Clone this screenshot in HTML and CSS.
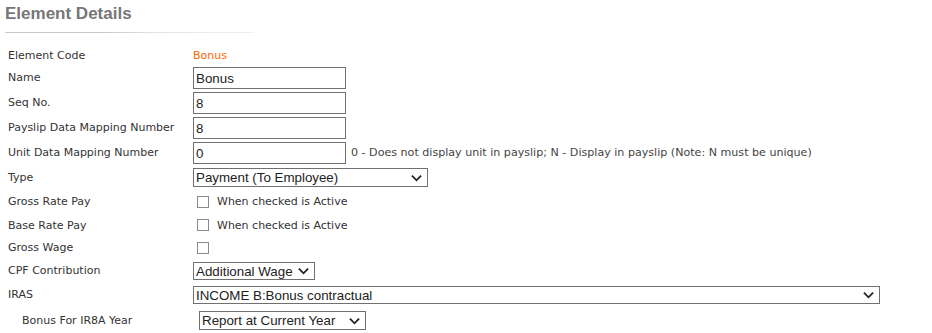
FILE: index.html
```html
<!DOCTYPE html>
<html lang="en">
<head>
  <meta charset="UTF-8">
  <title>Element Details</title>
  <link rel="stylesheet" href="styles.css">
</head>
<body>
  <h2 class="title">Element Details</h2>
  <div class="title-line"></div>

  <div class="form">
    <div class="row r-code">
      <label>Element Code</label>
      <span class="code">Bonus</span>
    </div>
    <div class="row r-input">
      <label for="name">Name</label>
      <input type="text" id="name" value="Bonus">
    </div>
    <div class="row r-input">
      <label for="seq">Seq No.</label>
      <input type="text" id="seq" value="8">
    </div>
    <div class="row r-input">
      <label for="payslip">Payslip Data Mapping Number</label>
      <input type="text" id="payslip" value="8">
    </div>
    <div class="row r-input">
      <label for="unit">Unit Data Mapping Number</label>
      <input type="text" id="unit" value="0">
      <span class="hint">0 - Does not display unit in payslip; N - Display in payslip (Note: N must be unique)</span>
    </div>
    <div class="row r-type">
      <label for="type">Type</label>
      <span class="sel w-type">
        <select id="type"><option>Payment (To Employee)</option></select>
        <svg viewBox="0 0 12 8"><path d="M1 1.5l5 5 5-5" /></svg>
      </span>
    </div>
    <div class="row r-check1">
      <label>Gross Rate Pay</label>
      <input type="checkbox" class="chk">
      <span class="chk-text">When checked is Active</span>
    </div>
    <div class="row r-check2">
      <label>Base Rate Pay</label>
      <input type="checkbox" class="chk">
      <span class="chk-text">When checked is Active</span>
    </div>
    <div class="row r-check3">
      <label>Gross Wage</label>
      <input type="checkbox" class="chk">
    </div>
    <div class="row r-cpf">
      <label for="cpf">CPF Contribution</label>
      <span class="sel w-cpf">
        <select id="cpf"><option>Additional Wage</option></select>
        <svg viewBox="0 0 12 8"><path d="M1 1.5l5 5 5-5" /></svg>
      </span>
    </div>
    <div class="row r-iras">
      <label for="iras">IRAS</label>
      <span class="sel w-iras">
        <select id="iras"><option>INCOME B:Bonus contractual</option></select>
        <svg viewBox="0 0 12 8"><path d="M1 1.5l5 5 5-5" /></svg>
      </span>
    </div>
    <div class="row r-year">
      <label class="sub" for="year">Bonus For IR8A Year</label>
      <span class="sel w-year">
        <select id="year"><option>Report at Current Year</option></select>
        <svg viewBox="0 0 12 8"><path d="M1 1.5l5 5 5-5" /></svg>
      </span>
    </div>
  </div>
</body>
</html>
```

FILE: styles.css
```css
* { box-sizing: border-box; }
body {
  margin: 0;
  font-family: "DejaVu Sans", Verdana, sans-serif;
  font-size: 11px;
  color: #333;
  background: #fff;
}
.title {
  margin: 0;
  padding: 4px 0 0 5px;
  height: 32px;
  font-family: "Liberation Sans", Arial, sans-serif;
  font-size: 17px;
  font-weight: bold;
  color: #777;
}
.title-line {
  margin: 0 0 0 5px;
  width: 249px;
  height: 1px;
  background: linear-gradient(to right, #c8c8c8 0%, #c8c8c8 40%, #e4e4e4 60%, #f0f0f0 100%);
}
.form { padding: 13px 0 0 8px; }
.row {
  display: flex;
  align-items: center;
}
.row label {
  width: 185px;
  flex-shrink: 0;
}
.row label.sub { padding-left: 14px; width: 191px; }
.r-code { height: 19px; }
.r-input { height: 25px; }
.r-type { height: 25px; }
.r-check1 { height: 23px; }
.r-check2 { height: 24px; }
.r-check3 { height: 21px; }
.r-cpf { height: 25px; }
.r-iras { height: 23px; }
.r-year { height: 28px; }
.code {
  color: #ff6600;
  font-size: 11px;
}
input[type=text] {
  width: 153px;
  height: 22px;
  margin: 0;
  padding: 1px 2px 0;
  border: 1px solid #707070;
  border-radius: 0;
  font-family: "Liberation Sans", Arial, sans-serif;
  font-size: 13.33px;
  color: #222;
}
.hint { margin-left: 5px; color: #444; font-size: 11.1px; }
.sel {
  position: relative;
  display: inline-block;
}
.sel select {
  appearance: none;
  -webkit-appearance: none;
  width: 100%;
  height: 19px;
  margin: 0;
  padding: 0 0 0 2px;
  border: 1px solid #707070;
  border-radius: 0;
  background: #fff;
  font-family: "Liberation Sans", Arial, sans-serif;
  font-size: 13.33px;
  line-height: 17px;
  color: #222;
}
.sel svg {
  position: absolute;
  right: 6px;
  top: 6px;
  width: 11px;
  height: 8px;
  fill: none;
  stroke: #222;
  stroke-width: 2;
  pointer-events: none;
}
.w-type { width: 235px; }
.w-cpf { width: 122px; }
.w-cpf select { height: 18px; }
.w-cpf svg { top: 5px; }
.w-iras { width: 687px; }
.w-iras select { height: 18px; }
.w-iras svg { top: 5px; }
.w-year { width: 167px; }
.chk {
  appearance: none;
  -webkit-appearance: none;
  width: 12px;
  height: 12px;
  margin: 0 0 0 4px;
  border: 1px solid #8a8a8a;
  background: #fff;
}
.chk-text { margin-left: 8px; }
```
